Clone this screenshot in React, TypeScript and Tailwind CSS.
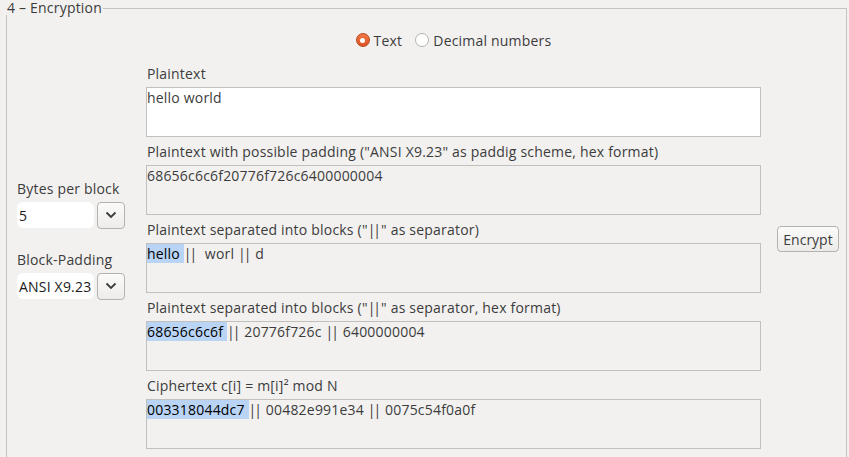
import React, { useState } from 'react';

const font = { fontFamily: '"Open Sans", Lato, sans-serif' };

function Radio({ checked, label, onClick }: { checked: boolean; label: string; onClick: () => void }) {
  return (
    <button onClick={onClick} className="flex items-center gap-[4px] text-[14px] tracking-[0.2px] text-[#3c3c3c]">
      {checked ? (
        <span className="flex h-[14px] w-[14px] items-center justify-center rounded-full border border-[#b84a1d] bg-gradient-to-b from-[#f07746] to-[#de5222]">
          <span className="h-[5px] w-[5px] rounded-full bg-white" />
        </span>
      ) : (
        <span className="h-[14px] w-[14px] rounded-full border border-[#b6b3ae] bg-white" />
      )}
      <span>{label}</span>
    </button>
  );
}

function Field({ label, children, white }: { label: React.ReactNode; children?: React.ReactNode; white?: boolean }) {
  return (
    <div className="flex flex-col">
      <div className="flex h-[28px] items-center pl-[1px] text-[14px] text-[#3c3c3c]">{label}</div>
      <div
        className={`h-[50px] border border-[#c2c0bc] text-[14px] leading-[20px] text-[#3c3c3c] ${
          white ? 'bg-white' : 'bg-[#f2f1f0]'
        }`}
      >
        {children}
      </div>
    </div>
  );
}

function Sel({ children }: { children: React.ReactNode }) {
  return <span className="bg-[#b9d4f5] text-black">{children}</span>;
}

// Open Sans puts wide bearings on "|", pull the pair together
function Bars() {
  return <span className="mr-[2px] tracking-[-2px]">||</span>;
}

function Combo({ value }: { value: string }) {
  return (
    <div className="flex items-center gap-[3px]">
      <div className="flex h-[26px] w-[78px] items-center rounded-[6px] bg-white pl-[2px] text-[14px] text-[#1a1a1a]">
        {value}
      </div>
      <button className="flex h-[27px] w-[28px] items-center justify-center rounded-[4px] border border-[#b5b2ad] bg-gradient-to-b from-[#fbfbfa] to-[#edecea]">
        <svg width="12" height="8" viewBox="0 0 12 8">
          <path d="M1.5 1.5 L6 6 L10.5 1.5" fill="none" stroke="#3c3c3c" strokeWidth="1.8" />
        </svg>
      </button>
    </div>
  );
}

export default function App() {
  const [mode, setMode] = useState<'text' | 'dec'>('text');
  return (
    <div
      className="h-[457px] w-[849px] overflow-hidden bg-[#f2f1f0] pt-[1px] pl-[6px] pr-[3px] tracking-[0.2px]"
      style={font}
    >
      <fieldset className="h-[470px] border border-[#c6c4c0] pl-[10px] pr-[7px]">
        <legend className="-ml-[11px] bg-[#f2f1f0] pl-[1px] pr-[1px] text-[14px] leading-[14px] text-[#3c3c3c]">
          4 – Encryption
        </legend>
        <div className="flex pt-[14px]">
          <div className="flex w-[108px] flex-col justify-center">
            <div className="h-[20px] leading-[20px] text-[14px] text-[#3c3c3c]">Bytes per block</div>
            <div className="mt-[3px]">
              <Combo value="5" />
            </div>
            <div className="mt-[21px] h-[20px] leading-[20px] text-[14px] text-[#3c3c3c]">Block-Padding</div>
            <div className="mt-[3px]">
              <Combo value="ANSI X9.23" />
            </div>
          </div>
          <div className="ml-[21px] flex w-[615px] flex-col">
            <div className="flex h-[22px] items-center justify-center gap-[13px]">
              <Radio checked={mode === 'text'} label="Text" onClick={() => setMode('text')} />
              <Radio checked={mode === 'dec'} label="Decimal numbers" onClick={() => setMode('dec')} />
            </div>
            <div className="mt-[8px] flex flex-col">
              <Field label="Plaintext" white>
                hello world
              </Field>
              <Field label={'Plaintext with possible padding ("ANSI X9.23" as paddig scheme, hex format)'}>
                68656c6c6f20776f726c6400000004
              </Field>
              <Field
                label={
                  <span>
                    Plaintext separated into blocks ("<Bars />" as separator)
                  </span>
                }
              >
                <Sel>hello </Sel>
                <Bars />
                &nbsp; worl <Bars /> d
              </Field>
              <Field
                label={
                  <span>
                    Plaintext separated into blocks ("<Bars />" as separator, hex format)
                  </span>
                }
              >
                <Sel>68656c6c6f </Sel>
                <Bars /> 20776f726c <Bars /> 6400000004
              </Field>
              <Field label="Ciphertext c[i] = m[i]² mod N">
                <Sel>003318044dc7 </Sel>
                <Bars /> 00482e991e34 <Bars /> 0075c54f0a0f
              </Field>
            </div>
          </div>
          <div className="ml-[16px] flex flex-1 flex-col justify-center">
            <button className="h-[26px] w-[62px] rounded-[4px] border border-[#b5b2ad] bg-gradient-to-b from-[#fbfbfa] to-[#ecebe9] text-[14px] tracking-normal text-[#3c3c3c]">
              Encrypt
            </button>
          </div>
        </div>
      </fieldset>
    </div>
  );
}
